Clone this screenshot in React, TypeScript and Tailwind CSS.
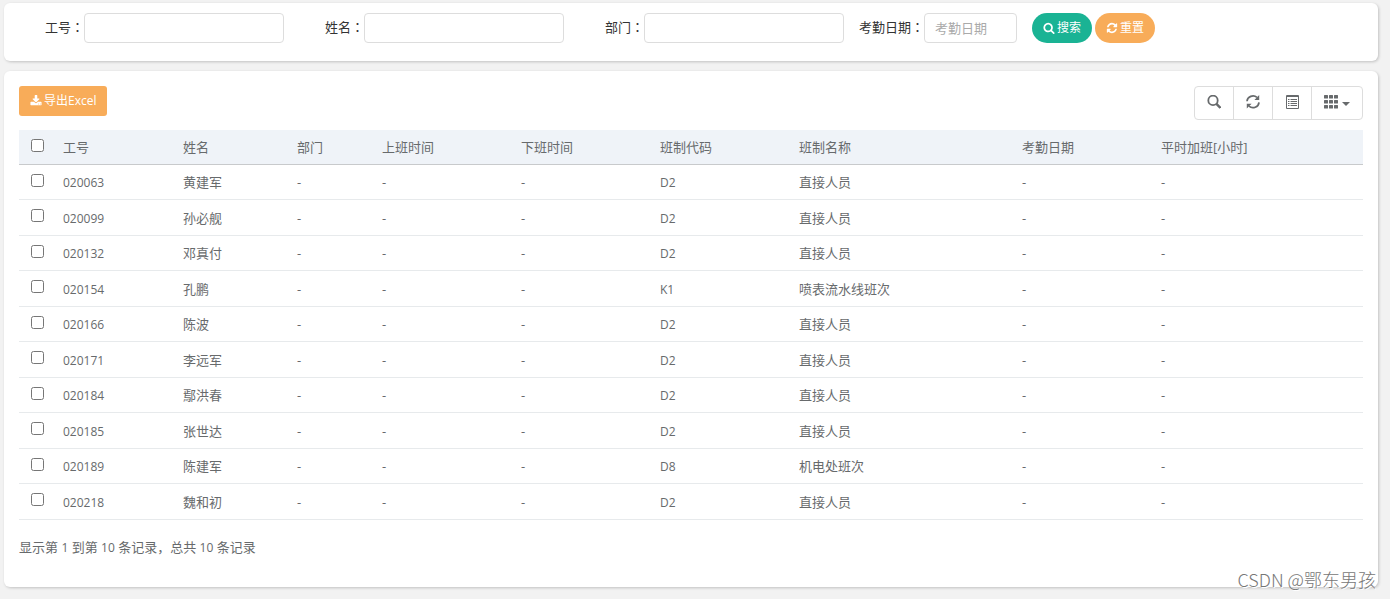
import type { ReactNode } from 'react';

type Row = {
  id: string;
  name: string;
  code: string;
  shift: string;
};

const rows: Row[] = [
  { id: '020063', name: '黄建军', code: 'D2', shift: '直接人员' },
  { id: '020099', name: '孙必舰', code: 'D2', shift: '直接人员' },
  { id: '020132', name: '邓真付', code: 'D2', shift: '直接人员' },
  { id: '020154', name: '孔鹏', code: 'K1', shift: '喷表流水线班次' },
  { id: '020166', name: '陈波', code: 'D2', shift: '直接人员' },
  { id: '020171', name: '李远军', code: 'D2', shift: '直接人员' },
  { id: '020184', name: '鄢洪春', code: 'D2', shift: '直接人员' },
  { id: '020185', name: '张世达', code: 'D2', shift: '直接人员' },
  { id: '020189', name: '陈建军', code: 'D8', shift: '机电处班次' },
  { id: '020218', name: '魏和初', code: 'D2', shift: '直接人员' },
];

const columns = [
  { title: '工号', width: 'w-[120px]' },
  { title: '姓名', width: 'w-[114px]' },
  { title: '部门', width: 'w-[85px]' },
  { title: '上班时间', width: 'w-[139px]' },
  { title: '下班时间', width: 'w-[139px]' },
  { title: '班制代码', width: 'w-[139px]' },
  { title: '班制名称', width: 'w-[223px]' },
  { title: '考勤日期', width: 'w-[139px]' },
  { title: '平时加班[小时]', width: 'w-[210px]' },
];

const SearchIcon = () => (
  <svg viewBox="0 0 1792 1792" className="size-3 fill-current" aria-hidden="true">
    <path d="M1216 832q0-185-131.5-316.5t-316.5-131.5-316.5 131.5-131.5 316.5 131.5 316.5 316.5 131.5 316.5-131.5 131.5-316.5zm512 832q0 52-38 90t-90 38q-54 0-90-38l-343-342q-179 124-399 124-143 0-273.5-55.5t-225-150-150-225-55.5-273.5 55.5-273.5 150-225 225-150 273.5-55.5 273.5 55.5 225 150 150 225 55.5 273.5q0 220-124 399l343 343q37 37 37 90z" />
  </svg>
);

const RefreshIcon = () => (
  <svg viewBox="0 0 1792 1792" className="size-3 fill-current" aria-hidden="true">
    <path d="M1639 1056q0 5-1 7-64 268-268 434.5t-478 166.5q-146 0-282.5-55t-243.5-157l-129 129q-19 19-45 19t-45-19-19-45v-448q0-26 19-45t45-19h448q26 0 45 19t19 45-19 45l-137 137q71 66 161 102t187 36q134 0 250-65t186-179q11-17 53-117 8-23 30-23h192q13 0 22.5 9.5t9.5 22.5zm25-800v448q0 26-19 45t-45 19h-448q-26 0-45-19t-19-45 19-45l138-138q-148-137-349-137-134 0-250 65t-186 179q-11 17-53 117-8 23-30 23h-199q-13 0-22.5-9.5t-9.5-22.5v-7q65-268 270-434.5t480-166.5q146 0 284 55.5t245 156.5l130-129q19-19 45-19t45 19 19 45z" />
  </svg>
);

const DownloadIcon = () => (
  <svg viewBox="0 0 1792 1792" className="size-3 fill-current" aria-hidden="true">
    <path d="M1344 1344q0-26-19-45t-45-19-45 19-19 45 19 45 45 19 45-19 19-45zm256 0q0-26-19-45t-45-19-45 19-19 45 19 45 45 19 45-19 19-45zm128-224v320q0 40-28 68t-68 28h-1472q-40 0-68-28t-28-68v-320q0-40 28-68t68-28h465l135 136q58 56 136 56t136-56l136-136h464q40 0 68 28t28 68zm-325-569q17 41-14 70l-448 448q-18 19-45 19t-45-19l-448-448q-31-29-14-70 17-39 59-39h256v-448q0-26 19-45t45-19h256q26 0 45 19t19 45v448h256q42 0 59 39z" />
  </svg>
);

const ToolSearch = () => (
  <svg viewBox="0 0 14 14" className="size-3.5" fill="none" stroke="currentColor" aria-hidden="true">
    <circle cx="6" cy="5.4" r="4.7" strokeWidth="1.8" />
    <path d="M9.2 8.6 13.4 12.8" strokeWidth="2.4" />
  </svg>
);

const ToolRefresh = () => (
  <svg viewBox="0 0 14 14" className="size-3.5" aria-hidden="true">
    <path
      d="M1 6.2A6 5.6 0 0 1 11 2.4M13 7.4A6 5.6 0 0 1 3 11.2"
      fill="none"
      stroke="currentColor"
      strokeWidth="1.7"
    />
    <path d="M13.2 0v5H8.4zM.8 13.6V8.8h4.8z" fill="currentColor" />
  </svg>
);

const ToolList = () => (
  <svg viewBox="0 0 14 14" className="size-3.5" fill="none" stroke="currentColor" aria-hidden="true">
    <path d="M1.5.5h12v13h-12z" />
    <path d="M1.5 1.5h12" />
    <path d="M3 4.5h1.5M3 6.5h1.5M3 8.5h1.5M3 10.5h1.5M5.5 4.5H12M5.5 6.5H12M5.5 8.5H12M5.5 10.5H12" />
  </svg>
);

const ToolGrid = () => (
  <svg viewBox="0 0 14 14" className="size-3.5 fill-current" aria-hidden="true">
    {[0, 5, 10].map((y) =>
      [0, 5, 10].map((x) => <rect key={`${x}-${y}`} x={x} y={y} width="4" height="3.6" rx="0.5" />)
    )}
  </svg>
);

// Full-width punctuation sits in the middle of its box
const Mark = ({ children }: { children: ReactNode }) => (
  <span className="font-['Noto_Sans_CJK_TC',sans-serif]">{children}</span>
);

// Digits and codes run one size below the Chinese text
const Latin = ({ children }: { children: ReactNode }) => <span className="text-xs">{children}</span>;

const Field = ({ id, label }: { id: string; label: string }) => (
  <div className="flex items-center">
    <label htmlFor={id} className="w-20 text-right text-[#333] pb-0.5">
      {label}
      <Mark>：</Mark>
    </label>
    <input id={id} type="text" className="h-[30px] w-[200px] rounded border border-[#ddd] px-2.5 outline-none" />
  </div>
);

const ToolButton = ({ label, children }: { label: string; children: ReactNode }) => (
  <button
    type="button"
    aria-label={label}
    className="-ml-px flex h-[34px] items-center gap-1 border border-[#ddd] px-3 pb-0.5 first:ml-0 first:rounded-l last:rounded-r"
  >
    {children}
  </button>
);

const card = 'rounded-md bg-white shadow-[1px_1px_3px_rgba(0,0,0,0.2)]';
const button = 'flex h-[30px] items-center gap-0.5 px-[11px] text-xs text-white';

export default function App() {
  return (
    <div className="relative min-h-screen bg-[#f2f2f2] pt-[3px] pr-3 pl-1 font-['Open_Sans','Noto_Sans_CJK_SC',sans-serif] text-[13px] leading-5 text-[#676a6c]">
      <form className={`${card} flex flex-wrap pt-2.5 pb-[18px]`}>
        <Field id="job-number" label="工号" />
        <Field id="user-name" label="姓名" />
        <Field id="department" label="部门" />
        <div className="flex items-center">
          <label htmlFor="work-date" className="w-20 text-right text-[#333] pb-0.5">
            考勤日期<Mark>：</Mark>
          </label>
          <input
            id="work-date"
            type="text"
            placeholder="考勤日期"
            className="h-[30px] w-[93px] rounded border border-[#ddd] px-2.5 outline-none placeholder:text-[#aaa]"
          />
        </div>
        <div className="ml-[15px] flex gap-[3px]">
          <button type="button" className={`${button} rounded-full bg-[#1ab394]`}>
            <SearchIcon />
            搜索
          </button>
          <button type="button" className={`${button} rounded-full bg-[#f8ac59]`}>
            <RefreshIcon />
            重置
          </button>
        </div>
      </form>

      <main className={`${card} mt-2.5 px-[15px] pt-[15px] pb-[30px]`}>
        <div className="mb-2.5 flex items-start justify-between">
          <button type="button" className={`${button} rounded-[3px] bg-[#f8ac59]`}>
            <DownloadIcon />
            导出Excel
          </button>
          <div className="flex">
            <ToolButton label="显示搜索">
              <ToolSearch />
            </ToolButton>
            <ToolButton label="刷新">
              <ToolRefresh />
            </ToolButton>
            <ToolButton label="切换视图">
              <ToolList />
            </ToolButton>
            <ToolButton label="列">
              <ToolGrid />
              <svg viewBox="0 0 8 4" className="mt-1 h-1 w-2 fill-current" aria-hidden="true">
                <path d="M0 0h8L4 4z" />
              </svg>
            </ToolButton>
          </div>
        </div>

        <table className="w-full table-fixed border-separate border-spacing-0 text-left">
          <thead className="bg-[#eff3f8]">
            <tr className="h-[35px]">
              <th className="w-9 border-b border-[#c8cacc]">
                <input type="checkbox" aria-label="全选" className="mx-auto mb-1 block size-[13px]" />
              </th>
              {columns.map((column) => (
                <th key={column.title} className={`${column.width} border-b border-[#c8cacc] px-2 pb-px font-normal`}>
                  {column.title}
                </th>
              ))}
            </tr>
          </thead>
          <tbody className="[&_td]:border-b [&_td]:border-[#e7eaec] [&_td]:px-2">
            {rows.map((row) => (
              <tr key={row.id} className="odd:h-[35px] even:h-9">
                <td>
                  <input type="checkbox" aria-label={row.id} className="mx-auto mb-1 block size-[13px]" />
                </td>
                <td>
                  <Latin>{row.id}</Latin>
                </td>
                <td>{row.name}</td>
                <td>-</td>
                <td>-</td>
                <td>-</td>
                <td>
                  <Latin>{row.code}</Latin>
                </td>
                <td>{row.shift}</td>
                <td>-</td>
                <td>-</td>
              </tr>
            ))}
          </tbody>
        </table>

        <p className="mt-[17px]">
          显示第 <Latin>1</Latin> 到第 <Latin>10</Latin> 条记录，总共 <Latin>10</Latin> 条记录
        </p>
      </main>

      <div className="absolute right-3.5 bottom-2 font-['Noto_Sans_CJK_SC',sans-serif] text-lg leading-6 font-light text-[#777] [text-shadow:1px_1px_0_#fff]">
        CSDN @鄂东男孩
      </div>
    </div>
  );
}
